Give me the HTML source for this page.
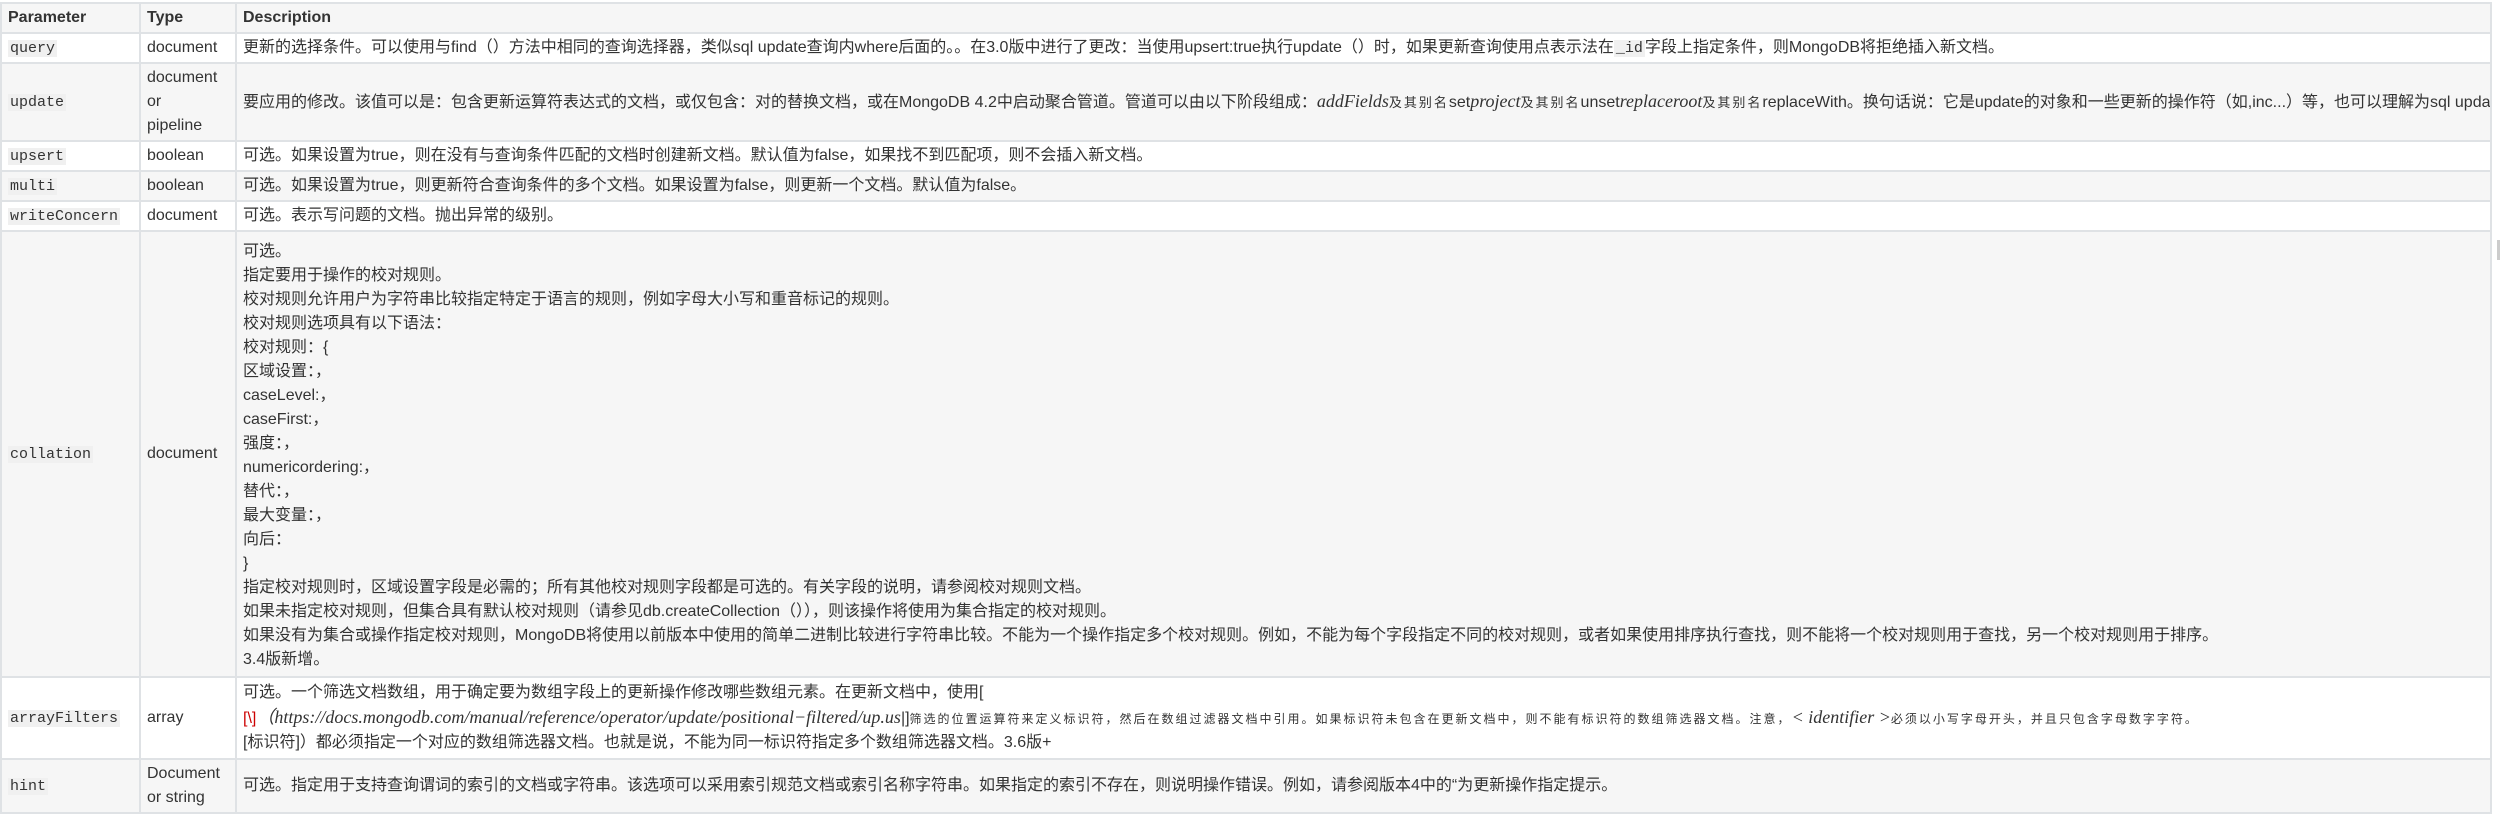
<!DOCTYPE html>
<html><head><meta charset="utf-8">
<style>
html,body{margin:0;padding:0;background:#fff;width:2500px;height:830px;overflow:hidden}
body{font-family:"Liberation Sans","Noto Sans CJK SC",sans-serif;font-size:16px;color:#333}
table{border-collapse:collapse;position:absolute;left:0;top:2px;width:2492px;table-layout:fixed}
td,th{border:2px solid #dfe2e5;padding:0 6px;vertical-align:middle;white-space:nowrap;overflow:hidden;line-height:24px}
th{text-align:left;font-weight:bold;height:28px;background:#f6f6f6}
tr.g td{background:#f6f6f6}
tr.w td{background:#fff}
td.col{padding-top:8px;padding-bottom:4px}
code{font-family:"Liberation Mono",monospace;font-size:15px;background:#f0f0f0;padding:0 2px}
.m{font-family:"Liberation Serif",serif;font-style:italic;font-size:18px}
.s{font-size:13px;letter-spacing:2px}
.sb{position:absolute;right:0;top:240px;width:3px;height:20px;background:#ccc}
</style></head><body>
<table>
<colgroup><col style="width:139px"><col style="width:96px"><col></colgroup>
<tr><th>Parameter</th><th>Type</th><th>Description</th></tr>
<tr class="w" style="height:30px"><td><code>query</code></td><td>document</td><td>更新的选择条件。可以使用与find（）方法中相同的查询选择器，类似sql update查询内where后面的。。在3.0版中进行了更改：当使用upsert:true执行update（）时，如果更新查询使用点表示法在<code>_id</code>字段上指定条件，则MongoDB将拒绝插入新文档。</td></tr>
<tr class="g" style="height:78px"><td><code>update</code></td><td>document<br>or<br>pipeline</td><td>要应用的修改。该值可以是：包含更新运算符表达式的文档，或仅包含：对的替换文档，或在MongoDB 4.2中启动聚合管道。管道可以由以下阶段组成：<span class="m">addFields</span><span class="s">及其别名</span>set<span class="m">project</span><span class="s">及其别名</span>unset<span class="m">replaceroot</span><span class="s">及其别名</span>replaceWith。换句话说：它是update的对象和一些更新的操作符（如,inc...）等，也可以理解为sql update查询内set后面的</td></tr>
<tr class="w" style="height:30px"><td><code>upsert</code></td><td>boolean</td><td>可选。如果设置为true，则在没有与查询条件匹配的文档时创建新文档。默认值为false，如果找不到匹配项，则不会插入新文档。</td></tr>
<tr class="g" style="height:30px"><td><code>multi</code></td><td>boolean</td><td>可选。如果设置为true，则更新符合查询条件的多个文档。如果设置为false，则更新一个文档。默认值为false。</td></tr>
<tr class="w" style="height:30px"><td><code>writeConcern</code></td><td>document</td><td>可选。表示写问题的文档。抛出异常的级别。</td></tr>
<tr class="g"><td><code>collation</code></td><td>document</td><td class="col">可选。<br>指定要用于操作的校对规则。<br>校对规则允许用户为字符串比较指定特定于语言的规则，例如字母大小写和重音标记的规则。<br>校对规则选项具有以下语法：<br>校对规则：{<br>区域设置：，<br>caseLevel:，<br>caseFirst:，<br>强度：，<br>numericordering:，<br>替代：，<br>最大变量：，<br>向后：<br>}<br>指定校对规则时，区域设置字段是必需的；所有其他校对规则字段都是可选的。有关字段的说明，请参阅校对规则文档。<br>如果未指定校对规则，但集合具有默认校对规则（请参见db.createCollection（）），则该操作将使用为集合指定的校对规则。<br>如果没有为集合或操作指定校对规则，MongoDB将使用以前版本中使用的简单二进制比较进行字符串比较。不能为一个操作指定多个校对规则。例如，不能为每个字段指定不同的校对规则，或者如果使用排序执行查找，则不能将一个校对规则用于查找，另一个校对规则用于排序。<br>3.4版新增。</td></tr>
<tr class="w" style="height:82px"><td><code>arrayFilters</code></td><td>array</td><td>可选。一个筛选文档数组，用于确定要为数组字段上的更新操作修改哪些数组元素。在更新文档中，使用[<br><span style="color:#c00">[\]</span><span class="m">（https://docs.mongodb.com/manual/reference/operator/update/positional−filtered/up.us</span>|]<span class="s" style="font-size:12px">筛选的位置运算符来定义标识符，然后在数组过滤器文档中引用。如果标识符未包含在更新文档中，则不能有标识符的数组筛选器文档。注意，</span><span class="m">&lt; identifier &gt;</span><span class="s" style="font-size:12px">必须以小写字母开头，并且只包含字母数字字符。</span><br>[标识符]）都必须指定一个对应的数组筛选器文档。也就是说，不能为同一标识符指定多个数组筛选器文档。3.6版+</td></tr>
<tr class="g" style="height:54px"><td><code>hint</code></td><td>Document<br>or string</td><td>可选。指定用于支持查询谓词的索引的文档或字符串。该选项可以采用索引规范文档或索引名称字符串。如果指定的索引不存在，则说明操作错误。例如，请参阅版本4中的“为更新操作指定提示。</td></tr>
</table>
<div class="sb"></div>
</body></html>
